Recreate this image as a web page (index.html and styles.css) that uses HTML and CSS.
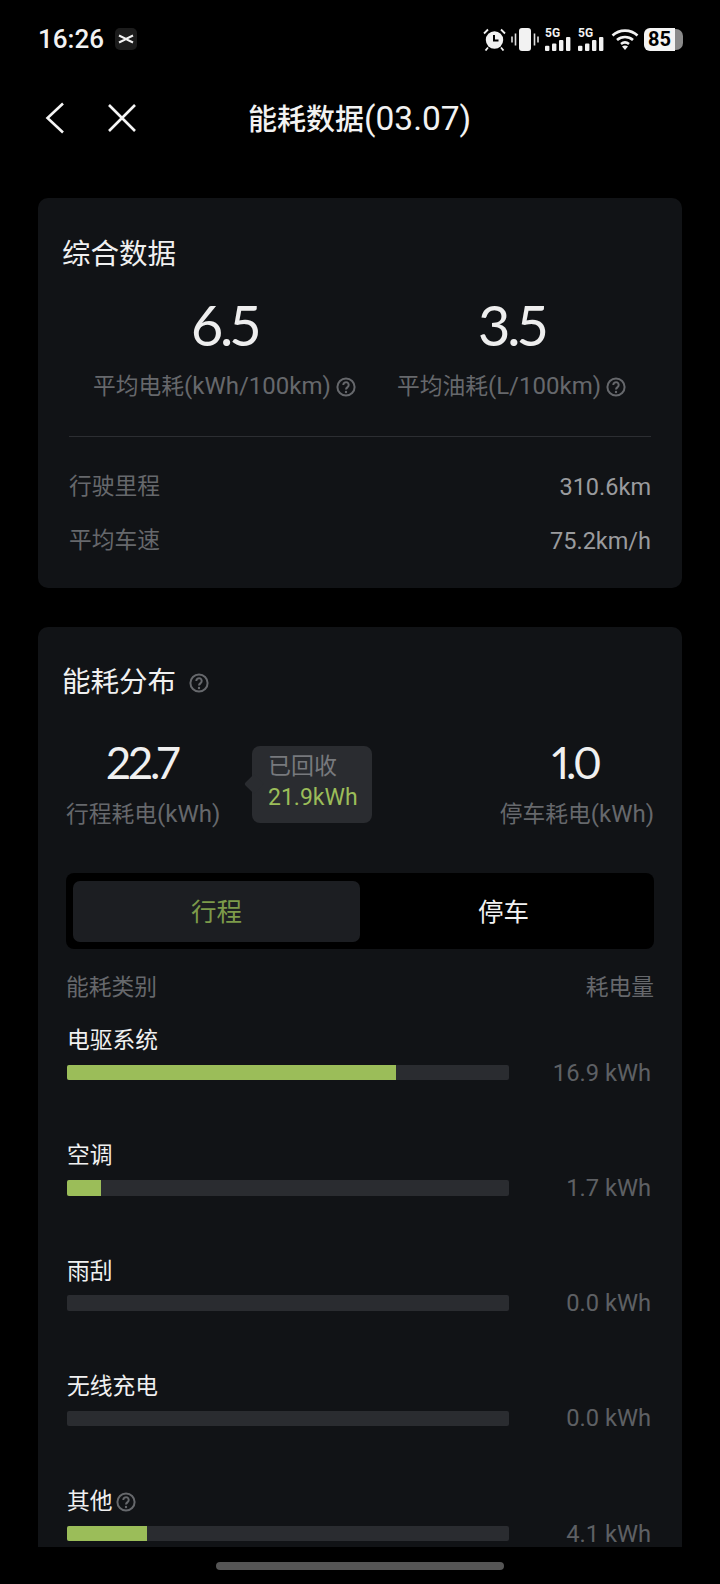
FILE: index.html
```html
<!DOCTYPE html>
<html lang="zh-CN">
  <head>
    <meta charset="utf-8">
    <meta name="viewport" content="width=device-width">
    <title>能耗数据</title>
    <link rel="stylesheet" href="styles.css">
  </head>
  <body>
    <svg class="defs" width="0" height="0">
      <symbol id="help" viewBox="0 0 20 20">
        <circle cx="10" cy="10" r="8.6" fill="none" stroke="currentColor" stroke-width="2"/>
        <path d="M7.3 7.9a2.7 2.7 0 1 1 4.4 2.1c-1 .8-1.7 1.3-1.7 2.600" fill="none" stroke="currentColor" stroke-width="2"/>
        <circle cx="10" cy="15" r="1.2" fill="currentColor"/>
      </symbol>
      <symbol id="signal" viewBox="0 0 26 14">
        <rect x="0" y="8.700" width="4.400" height="5.300" rx="1"/>
        <rect x="7" y="6.400" width="4.400" height="7.600" rx="1"/>
        <rect x="14" y="3" width="4.400" height="11" rx="1"/>
        <rect x="21" y="0" width="4.400" height="14" rx="1"/>
      </symbol>
    </svg>

    <div class="statusbar">
      <div class="status-left">
        <span class="time">16:26</span>
        <span class="app-tile">
          <svg width="16" height="10" viewBox="0 0 16 10"><path d="M1 1.500 8 5l7-3.500M1 8.500 8 5l7 3.500" fill="none" stroke="#f2f2f2" stroke-width="2"/></svg>
        </span>
      </div>
      <div class="status-right">
        <svg class="ic-alarm" width="23" height="23" viewBox="0 0 23 23">
          <circle cx="11.500" cy="12" r="8.700" fill="#f2f2f2"/>
          <path d="M11 7v5.500h4.500" fill="none" stroke="#000" stroke-width="2"/>
          <path d="M1 5.500 5 1.500M22 5.500 18 1.500M5 19.500 2.500 22.500M18 19.500 20.500 22.500" stroke="#f2f2f2" stroke-width="1.800" fill="none"/>
        </svg>
        <svg class="ic-vibrate" width="28" height="23" viewBox="0 0 28 23">
          <rect x="8" y="0" width="12" height="23" rx="3" fill="#f2f2f2"/>
          <path d="M1 8.500v6M4.500 5.500v12M23.500 5.500v12M27 8.500v6" stroke="#e0e0e0" stroke-width="1.600" fill="none"/>
        </svg>
        <span class="net"><span class="net-label">5G</span><svg class="net-bars" width="26" height="14"><use href="#signal"/></svg></span>
        <span class="net"><span class="net-label">5G</span><svg class="net-bars" width="26" height="14"><use href="#signal"/></svg></span>
        <svg class="ic-wifi" width="28" height="22" viewBox="0 0 28 22">
          <path d="M1.500 7.500C8.500 1 19.500 1 26.500 7.500M6 12c4.500-4 11.500-4 16 0M10 16c2.500-2 5.500-2 8 0" fill="none" stroke="#f2f2f2" stroke-width="2.600"/>
          <path d="M14 22l-3-3.600c1.800-1.200 4.200-1.200 6 0z" fill="#f2f2f2"/>
        </svg>
        <span class="battery"><span class="battery-level">85</span><span class="battery-rest"></span></span>
      </div>
    </div>

    <div class="toolbar">
      <svg class="nav-back" width="20" height="32" viewBox="0 0 20 32"><path d="M18 1.500 2.500 16 18 30.500" fill="none" stroke="#f5f5f5" stroke-width="2.600"/></svg>
      <svg class="nav-close" width="30" height="30" viewBox="0 0 30 30"><path d="M2 2l26 26M28 2 2 28" fill="none" stroke="#f5f5f5" stroke-width="2.600"/></svg>
      <h1 class="page-title">能耗数据<span class="title-date">(03.07)</span></h1>
    </div>

    <div class="content">
      <section class="card card-summary">
        <h2 class="card-title">综合数据</h2>
        <div class="summary-stats">
          <div class="summary-stat">
            <div class="summary-num">6.5</div>
            <div class="stat-label"><span>平均电耗<span class="lat">(kWh/100km)</span></span><svg class="help" width="20" height="20"><use href="#help"/></svg></div>
          </div>
          <div class="summary-stat">
            <div class="summary-num">3.5</div>
            <div class="stat-label"><span>平均油耗<span class="lat">(L/100km)</span></span><svg class="help" width="20" height="20"><use href="#help"/></svg></div>
          </div>
        </div>
        <div class="divider"></div>
        <div class="info-row"><span>行驶里程</span><span class="info-val">310.6km</span></div>
        <div class="info-row info-row-last"><span>平均车速</span><span class="info-val">75.2km/h</span></div>
      </section>

      <section class="card card-dist">
        <h2 class="card-title">能耗分布<svg class="help help-title" width="20" height="20"><use href="#help"/></svg></h2>
        <div class="dist-stats">
          <div class="dist-stat">
            <div class="dist-num">22.7</div>
            <div class="stat-label"><span>行程耗电<span class="lat">(kWh)</span></span></div>
          </div>
          <div class="dist-stat">
            <div class="dist-num">1.0</div>
            <div class="stat-label"><span>停车耗电<span class="lat">(kWh)</span></span></div>
          </div>
          <div class="recovered">
            <div class="recovered-label">已回收</div>
            <div class="recovered-val">21.9kWh</div>
          </div>
        </div>

        <div class="segment">
          <div class="seg-item seg-active">行程</div>
          <div class="seg-item">停车</div>
        </div>

        <div class="list-head"><span>能耗类别</span><span>耗电量</span></div>

        <div class="item">
          <div class="item-name">电驱系统</div>
          <div class="item-row">
            <div class="bar"><div class="bar-fill" style="width:74.4%"></div></div>
            <span class="item-val">16.9 kWh</span>
          </div>
        </div>
        <div class="item">
          <div class="item-name">空调</div>
          <div class="item-row">
            <div class="bar"><div class="bar-fill" style="width:7.6%"></div></div>
            <span class="item-val">1.7 kWh</span>
          </div>
        </div>
        <div class="item">
          <div class="item-name">雨刮</div>
          <div class="item-row">
            <div class="bar"></div>
            <span class="item-val">0.0 kWh</span>
          </div>
        </div>
        <div class="item">
          <div class="item-name">无线充电</div>
          <div class="item-row">
            <div class="bar"></div>
            <span class="item-val">0.0 kWh</span>
          </div>
        </div>
        <div class="item">
          <div class="item-name">其他<svg class="help help-item" width="20" height="20"><use href="#help"/></svg></div>
          <div class="item-row">
            <div class="bar"><div class="bar-fill" style="width:18.1%"></div></div>
            <span class="item-val">4.1 kWh</span>
          </div>
        </div>
      </section>
    </div>

    <div class="home-area"><div class="home-bar"></div></div>
  </body>
</html>
```

FILE: styles.css
```css
* {margin: 0; padding: 0; box-sizing: border-box;}

html, body {
	background: #000;
	height: 1584px;
	overflow: hidden;
}
body {
	display: flex;
	flex-direction: column;
	font-family: Roboto, "Noto Sans CJK SC", sans-serif;
	color: #f2f2f2;
}
.defs {position: absolute;}

/* status bar */
.statusbar {
	height: 78px;
	flex: none;
	display: flex;
	align-items: center;
	justify-content: space-between;
	padding: 0 37px 0 38px;
}
.status-left {display: flex; align-items: center; gap: 11px;}
.time {font-size: 26px; font-weight: 500; line-height: 30px;}
.app-tile {
	width: 22px;
	height: 22px;
	background: #1c1c1c;
	border-radius: 5px;
	display: flex;
	align-items: center;
	justify-content: center;
}
.status-right {display: flex; align-items: center; height: 24px;}
.ic-vibrate {margin-left: 5px;}
.net {
	width: 26px;
	height: 24px;
	margin-left: 6px;
	position: relative;
}
.net + .net {margin-left: 7px;}
.net-label {
	position: absolute;
	left: 0;
	top: 0;
	font-size: 12px;
	font-weight: 700;
	line-height: 12px;
}
.net-bars {position: absolute; right: 0; bottom: 0; fill: #f2f2f2;}
.ic-wifi {margin-left: 7px;}
.battery {display: flex; align-items: center; margin-left: 5px; height: 23px;}
.battery-level {
	width: 31px;
	height: 23px;
	background: #f4f4f4;
	border-radius: 6px 0 0 6px;
	color: #000;
	font-size: 20px;
	font-weight: 700;
	line-height: 23px;
	text-align: center;
}
.battery-rest {
	width: 8px;
	height: 21px;
	background: #8a8a8a;
	border-radius: 0 7px 7px 0;
}

/* toolbar */
.toolbar {
	height: 80px;
	flex: none;
	display: flex;
	align-items: center;
	padding-left: 45px;
}
.nav-close {margin-left: 42px;}
.page-title {
	margin-left: 111px;
	padding-top: 4px;
	font-size: 29px;
	font-weight: 500;
	line-height: 40px;
	white-space: nowrap;
}
.title-date {font-size: 33.500px; font-weight: 400; line-height: 1;}

/* cards */
.content {
	height: 1389px;
	flex: none;
	padding: 40px 38px 0;
	overflow: hidden;
}
.card {
	background: #111316;
	border-radius: 10px;
}
.card-summary {height: 390px; padding-top: 37px;}
.card-dist {margin-top: 39px; padding-top: 36px; padding-bottom: 40px;}
.card-title {
	padding-left: 24px;
	display: flex;
	align-items: center;
	font-size: 28.500px;
	font-weight: 400;
	line-height: 40px;
	color: #f0f0f0;
}
.stat-label {
	display: flex;
	align-items: center;
	justify-content: center;
	font-size: 22.750px;
	line-height: 32px;
	color: #66686c;
	white-space: nowrap;
}
.lat {font-size: 24px; line-height: 1;}
.help {flex: none; color: #66686c; margin-left: 5px;}
.help-title {margin-left: 13px;}

.summary-stats {
	display: grid;
	grid-template-columns: 287px 287px;
	padding-left: 43px;
	margin-top: 20px;
}
.summary-num {
	font-family: Lato, "Noto Sans CJK SC", sans-serif;
	font-variant-numeric: proportional-nums;
	font-size: 56px;
	letter-spacing: -3px;
	line-height: 60px;
	text-align: center;
	color: #eee;
	margin-bottom: 16px;
}
.divider {
	height: 1px;
	background: #2c2e32;
	margin: 33px 31px 0;
}
.info-row {
	display: flex;
	justify-content: space-between;
	margin: 34px 31px 0;
	font-size: 22.750px;
	line-height: 32px;
	color: #66686c;
}
.info-row-last {margin-top: 22px;}
.info-val {font-size: 23.500px; color: #9a9b9e;}

.dist-stats {
	position: relative;
	display: flex;
	justify-content: space-between;
	margin: 34px 28px 0;
}
.dist-num {
	font-family: Lato, "Noto Sans CJK SC", sans-serif;
	font-variant-numeric: proportional-nums;
	font-size: 44px;
	letter-spacing: -3px;
	line-height: 50px;
	text-align: center;
	padding-right: 3px;
	color: #f0f0f0;
	margin-bottom: 12px;
}
.recovered {
	position: absolute;
	left: 186px;
	top: 9px;
	width: 120px;
	height: 77px;
	padding: 5px 16px 0;
	background: #2a2c30;
	border-radius: 8px;
	font-size: 23px;
	line-height: 31px;
}
.recovered::before {
	content: "";
	position: absolute;
	left: -5px;
	top: 31px;
	width: 14px;
	height: 14px;
	background: #2a2c30;
	transform: rotate(45deg);
	border-radius: 2px;
}
.recovered-label {color: #77797d; position: relative;}
.recovered-val {color: #9bbd59; position: relative; white-space: nowrap;}

.segment {
	display: flex;
	height: 76px;
	margin: 42px 28px 0 28px;
	padding: 8px 7px 7px;
	background: #000;
	border-radius: 8px;
}
.seg-item {
	width: 287px;
	display: flex;
	align-items: center;
	justify-content: center;
	padding-bottom: 5px;
	font-size: 25.500px;
	color: #f2f2f2;
	border-radius: 7px;
}
.seg-active {background: #1c1e22; color: #7d9a4a;}

.list-head {
	display: flex;
	justify-content: space-between;
	margin: 23px 28px 0 28px;
	font-size: 22.750px;
	line-height: 32px;
	color: #66686c;
}
.item {
	height: 115.300px;
	padding: 1px 31px 0 29px;
}
.list-head + .item {margin-top: 20px;}
.item-name {
	display: flex;
	align-items: center;
	font-size: 22.750px;
	line-height: 32px;
	color: #f0f0f0;
}
.help-item {margin-left: 3px;}
.item-row {
	display: flex;
	align-items: center;
	justify-content: space-between;
	margin-top: 8px;
	height: 15px;
}
.bar {
	width: 442px;
	height: 15.500px;
	background: #2a2c30;
	border-radius: 2px;
	overflow: hidden;
}
.bar-fill {height: 100%; background: #9bbd59;}
.item-val {
	font-size: 23.700px;
	line-height: 30px;
	color: #5e6064;
	white-space: nowrap;
}

/* gesture bar */
.home-area {flex: none; padding-top: 15px;}
.home-bar {
	width: 288px;
	height: 8px;
	margin: 0 auto;
	background: #555;
	border-radius: 4px;
}
```
